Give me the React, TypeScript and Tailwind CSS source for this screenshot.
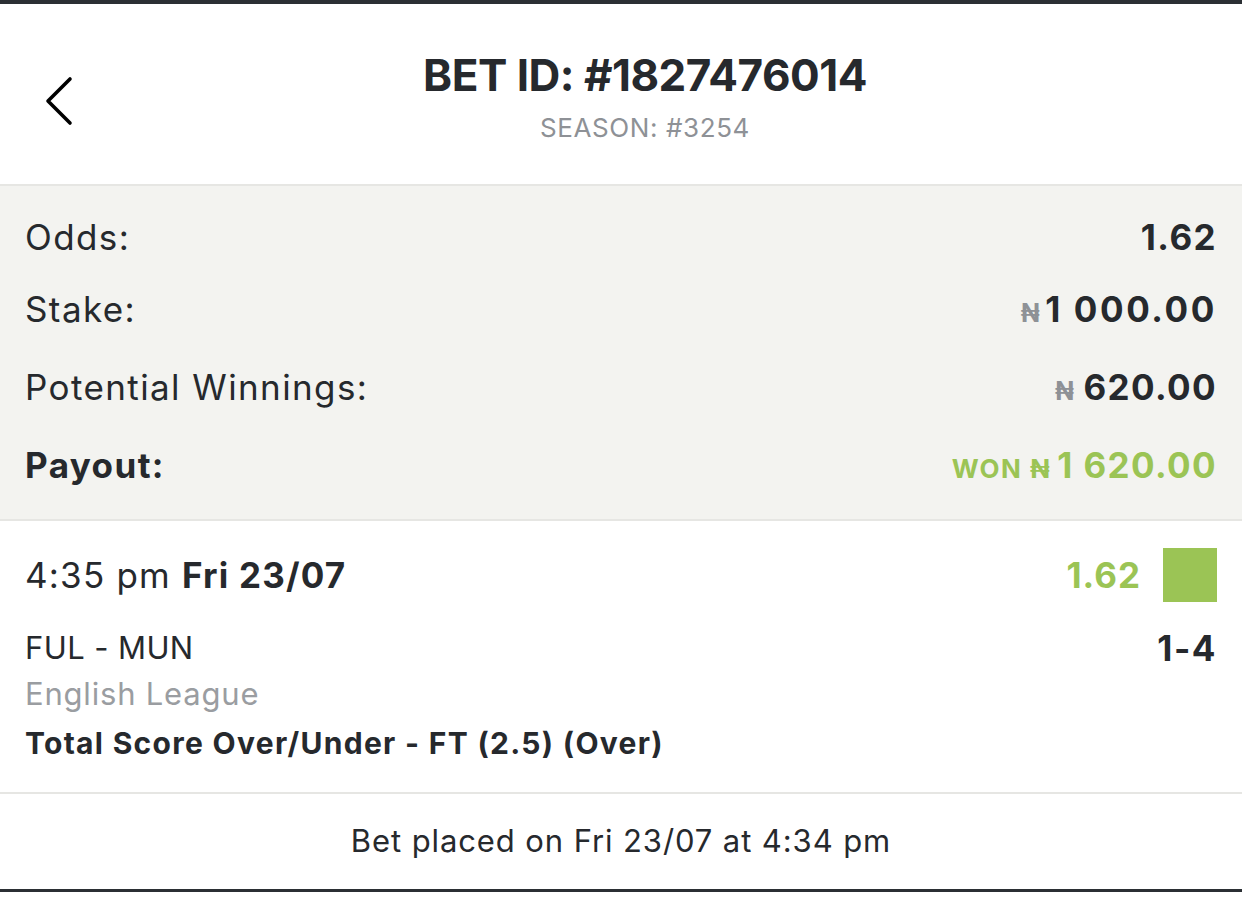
function Naira({ className }: { className: string }) {
  return <span className={className}>₦</span>;
}

function BackIcon() {
  return (
    <svg viewBox="0 0 28 50" fill="none" stroke="currentColor" strokeWidth={3.6} className="h-[50px] w-[28px]">
      <path strokeLinecap="round" strokeLinejoin="round" d="M25 3L3 25l22 22" />
    </svg>
  );
}

function Row({ label, children, bold, h }: { label: string; children: React.ReactNode; bold?: boolean; h: string }) {
  return (
    <div className={`flex items-center justify-between ${h}`}>
      <span className={bold ? "font-bold" : ""}>{label}</span>
      <span className="flex items-baseline font-bold">{children}</span>
    </div>
  );
}

export default function App() {
  return (
    <div
      className="flex h-[906px] w-[1242px] flex-col bg-white text-[#26292d]"
      style={{ fontFamily: "Inter, 'Noto Sans', sans-serif" }}
    >
      <div className="h-[4px] bg-[#2b2f34]" />

      <header className="relative flex h-[182px] flex-col items-center justify-center border-b-2 border-[#e6e6e3] pl-[48px]">
        <button className="absolute left-[45px] top-[72px] text-black">
          <BackIcon />
        </button>
        <h1 className="mt-[6px] text-[44px] font-bold leading-none tracking-[-0.5px]">BET ID: #1827476014</h1>
        <p className="mt-[18px] text-[26px] leading-none tracking-[0.6px] text-[#8e9196]">SEASON: #3254</p>
      </header>

      <section className="flex h-[335px] flex-col border-b-2 border-[#e6e6e3] bg-[#f3f3f0] px-[25px] pt-[16px] text-[35px] tracking-[1.4px]">
        <Row label="Odds:" h="h-[70px]">1.62</Row>
        <Row label="Stake:" h="h-[74px]">
          <Naira className="mr-[4px] text-[25px] text-[#8e9196]" />
          <span className="tracking-[2.6px]">1 000.00</span>
        </Row>
        <Row label="Potential Winnings:" h="h-[82px]">
          <Naira className="mr-[8px] text-[25px] text-[#8e9196]" />620.00
        </Row>
        <Row label="Payout:" bold h="h-[74px]">
          <span className="text-[#9bc455]">
            <span className="mr-[8px] text-[26px]">WON</span>
            <span className="mr-[6px] text-[26px]">₦</span>1 620.00
          </span>
        </Row>
      </section>

      <section className="flex h-[273px] flex-col border-b-2 border-[#e6e6e3] px-[25px] pt-[27px]">
        <div className="flex items-center justify-between">
          <span className="text-[35px] tracking-[1.2px]">
            4:35 pm <span className="font-bold">Fri 23/07</span>
          </span>
          <div className="flex items-center gap-[22px]">
            <span className="text-[35px] font-bold tracking-[1px] text-[#9bc455]">1.62</span>
            <div className="h-[54px] w-[54px] bg-[#9bc455]" />
          </div>
        </div>
        <div className="mt-[20px] flex items-center justify-between text-[31px] tracking-[0.4px]">
          <span>FUL - MUN</span>
          <span className="text-[35px] font-bold tracking-[1.5px]">1-4</span>
        </div>
        <p className="mt-[-4px] text-[31px] tracking-[0.8px] text-[#9a9da1]">English League</p>
        <p className="mt-[4px] text-[30px] font-bold tracking-[1.3px]">Total Score Over/Under - FT (2.5) (Over)</p>
      </section>

      <div className="flex h-[95px] items-center justify-center text-[31px] tracking-[0.9px]">
        Bet placed on Fri 23/07 at 4:34 pm
      </div>
      <div className="h-[3px] bg-[#2b2f34]" />
      <div className="flex-1 bg-white" />
    </div>
  );
}
